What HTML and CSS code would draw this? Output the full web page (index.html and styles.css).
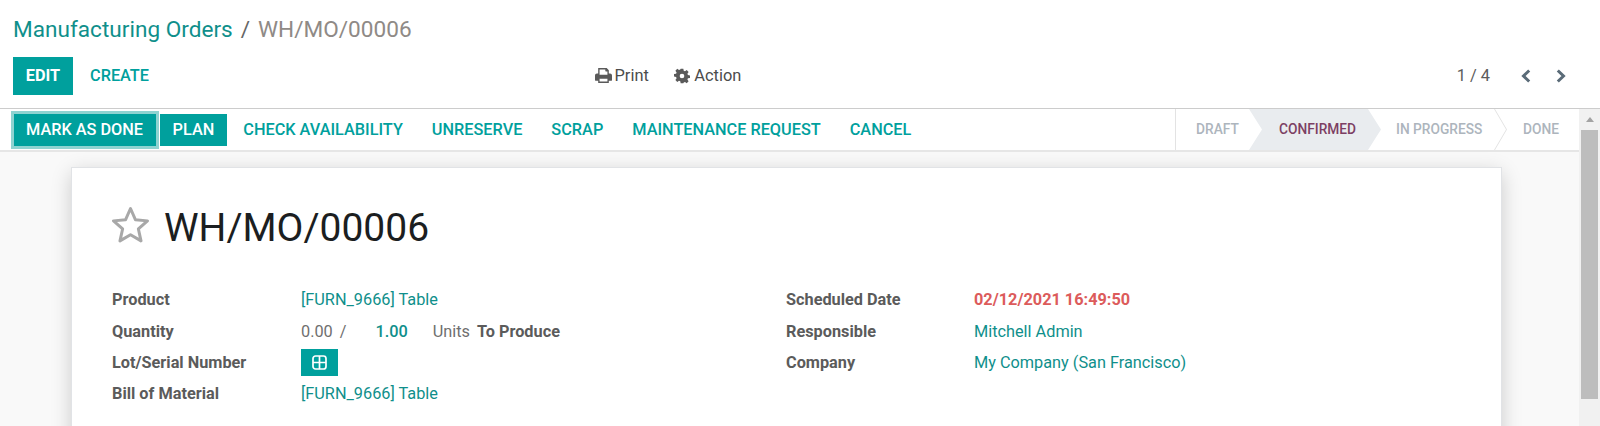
FILE: index.html
```html
<!DOCTYPE html>
<html lang="en">
<head>
<meta charset="utf-8">
<title>WH/MO/00006</title>
<link rel="stylesheet" href="styles.css">
</head>
<body>
<header class="panel">
  <nav class="crumbs"><a class="crumb-link">Manufacturing Orders</a><span class="crumb-sep">/</span><span class="crumb-cur">WH/MO/00006</span></nav>
  <div class="panel-row">
    <div class="panel-left">
      <button class="btn btn-edit">EDIT</button>
      <button class="btn btn-link btn-create">CREATE</button>
    </div>
    <div class="panel-mid">
      <span class="tool">
        <svg class="tool-ico" viewBox="0 0 16 14"><path fill-rule="evenodd" d="M3 0h8l2 2v3.2h1.2c1 0 1.8.8 1.8 1.8v4.2c0 .5-.3.8-.8.8H13v2H3v-2H.8c-.5 0-.8-.3-.8-.8V7c0-1 .8-1.800 1.800-1.800H3zm1.300 1.400v4.800h7.400V3.200h-1.400c-.4 0-.6-.2-.6-.6V1.400zM4.300 10v2.700h7.400V10z"/></svg>Print</span>
      <span class="tool tool-action">
        <svg class="tool-ico gear" viewBox="0 0 24 24"><path fill-rule="evenodd" d="M10 1h4l.6 3.100 1.900.8L19.100 3.100 21.900 6l-1.800 2.600.8 1.900 3.100.6v3.800l-3.100.6-.8 1.900 1.800 2.600-2.800 2.900-2.600-1.800-1.900.8L14 23h-4l-.6-3.100-1.900-.8-2.600 1.800L2.100 18l1.800-2.600-.8-1.900L0 12.900V9.100l3.100-.6.8-1.900L2.100 4l2.800-2.900 2.600 1.800 1.900-.8zM12 8.500a3.500 3.500 0 1 0 0 7 3.500 3.500 0 0 0 0-7z"/></svg>Action</span>
    </div>
    <div class="panel-right">
      <span class="pager">1 / 4</span>
      <svg class="chev" viewBox="0 0 10 14"><path d="M8.200 1.500 2.500 7l5.700 5.500"/></svg>
      <svg class="chev" viewBox="0 0 10 14"><path d="M1.800 1.500 7.500 7l-5.700 5.500"/></svg>
    </div>
  </div>
</header>
<div class="body">
  <main class="main">
    <div class="statusbar">
      <div class="actions">
        <button class="btn btn-primary btn-focus">MARK AS DONE</button>
        <button class="btn btn-primary btn-plan">PLAN</button>
        <button class="btn btn-link">CHECK AVAILABILITY</button>
        <button class="btn btn-link">UNRESERVE</button>
        <button class="btn btn-link">SCRAP</button>
        <button class="btn btn-link">MAINTENANCE REQUEST</button>
        <button class="btn btn-link">CANCEL</button>
      </div>
      <div class="steps">
        <span class="step step-first">DRAFT</span>
        <span class="step step-on">CONFIRMED</span>
        <span class="step step-prog">IN PROGRESS</span>
        <span class="step step-last">DONE</span>
      </div>
    </div>
    <div class="canvas">
      <section class="sheet">
        <h1 class="title">
          <svg class="star" viewBox="0 0 38 40"><path d="M18.500 3.500 23.380 14.690 35.500 15.870 26.390 23.960 29.020 35.880 18.500 29.700 7.980 35.880 10.610 23.960 1.500 15.870 13.620 14.690Z"/></svg>
          <span>WH/MO/00006</span>
        </h1>
        <div class="groups">
          <div class="group">
            <div class="row"><span class="label">Product</span><a class="val link">[FURN_9666] Table</a></div>
            <div class="row"><span class="label">Quantity</span><span class="val qty"><span class="muted">0.00</span><span class="muted slash">/</span><span class="qty-num">1.00</span><span class="muted">Units</span><strong class="qty-tail">To Produce</strong></span></div>
            <div class="row"><span class="label">Lot/Serial Number</span><span class="val"><button class="btn-add"><svg class="add-ico" viewBox="0 0 15 15"><rect x="1" y="1" width="13" height="13" rx="2.500"/><path d="M7.500 1v13M1 7.500h13"/></svg></button></span></div>
            <div class="row"><span class="label">Bill of Material</span><a class="val link">[FURN_9666] Table</a></div>
          </div>
          <div class="group group-right">
            <div class="row"><span class="label">Scheduled Date</span><span class="val late">02/12/2021 16:49:50</span></div>
            <div class="row"><span class="label">Responsible</span><a class="val link">Mitchell Admin</a></div>
            <div class="row"><span class="label">Company</span><a class="val link">My Company (San Francisco)</a></div>
          </div>
        </div>
      </section>
    </div>
  </main>
  <div class="scrollbar"><span class="sb-arrow"></span><span class="sb-thumb"></span></div>
</div>
</body>
</html>
```
FILE: styles.css
```css
* { box-sizing: border-box; }
html, body { margin: 0; height: 100%; overflow: hidden; }
body { display: flex; flex-direction: column; background: #fff; color: #4c4c4c; font: 16.3px/1.5 Roboto, "Liberation Sans", sans-serif; }
a { text-decoration: none; }

.panel { height: 109px; flex: none; padding: 13px 33px 0 13px; border-bottom: 1px solid #ccc; }
.crumbs { display: flex; align-items: center; height: 33px; font-size: 22.600px; }
.crumb-link { color: #0f8f8b; }
.crumb-sep { margin: 0 8px; color: #666; }
.crumb-cur { color: #8f8a86; }
.panel-row { display: grid; grid-template-columns: 1fr 1fr 1fr; align-items: center; margin-top: 11px; height: 38px; }
.panel-left { display: flex; align-items: center; }
.panel-mid { display: flex; justify-content: flex-start; gap: 25.500px; padding-left: 64px; font-size: 16.400px; color: #4c4c4c; }
.tool { display: inline-flex; align-items: center; gap: 2.500px; }
.tool-action { gap: 4px; }
.tool-ico { width: 17px; height: 15px; fill: #5a5a5a; }
.tool-ico.gear { width: 16px; height: 16px; }
.panel-right { display: flex; align-items: center; justify-content: flex-end; }
.pager { color: #5c5c5c; font-size: 16.400px; margin-right: 31px; }
.chev { width: 10px; height: 14px; margin-right: 25px; fill: none; stroke: #5a6b78; stroke-width: 3; }
.chev:last-child { margin-right: 1px; }

.btn { border: 0; background: none; font: 500 16.300px/1.4 Roboto, "Liberation Sans", sans-serif; padding: 0 12.500px; cursor: pointer; color: #00a09d; white-space: nowrap; }
.btn-edit { background: #00a09d; color: #fff; height: 38px; width: 60px; padding: 0; font-weight: 700; }
.btn-link { padding: 0 14.500px; }
.btn-create { padding: 0 17px; }
.btn-primary { background: #00a09d; color: #fff; height: 32px; }
.btn-plan { padding: 0 13px; }
.btn-plan + .btn-link { margin-left: 1.500px; }
.btn-focus { box-shadow: 0 0 0 3px #8fd3d1; margin-right: 4px; }

.body { flex: 1; display: flex; min-height: 0; }
.main { flex: 1; display: flex; flex-direction: column; min-width: 0; background: #f9f9f9; }
.statusbar { display: flex; justify-content: space-between; align-items: stretch; height: 43px; background: #fff; border-bottom: 2px solid #e6e6e6; }
.actions { display: flex; align-items: center; padding: 1px 0 0 13.500px; }
.steps { display: flex; height: 41px; border-left: 1px solid #e3e3e3; font-size: 13.750px; font-weight: 500; color: #adb5bd; }
.step { display: flex; align-items: center; position: relative; }
.step-first { width: 73px; padding-left: 20px; }
.step-on { width: 132px; padding-left: 30px; color: #7c3f63; background: #e9ecef; clip-path: polygon(0 0, 119px 0, 132px 50%, 119px 100%, 0 100%, 13px 50%); }
.step-prog { width: 113px; padding-left: 15px; }
.step-last { width: 85px; padding-left: 29px; }
.step-prog::after { content: ""; position: absolute; top: 0; right: -13px; width: 13px; height: 100%; background: #e3e3e3; clip-path: polygon(0 0, 1px 0, 100% 50%, 1px 100%, 0 100%, 12px 50%); }

.canvas { flex: 1; padding: 15px 77px 0 71px; overflow: hidden; }
.sheet { height: 300px; background: #fff; border: 1px solid #e1e3e6; box-shadow: 0 5px 20px -1px rgba(0,0,0,.2); padding: 0 40px; }
.title { display: flex; align-items: flex-start; margin: 37px 0 0; height: 46px; font-size: 39px; font-weight: 400; line-height: 46px; color: #1b1e21; }
.star { width: 38px; height: 40px; fill: none; stroke: #a8a8a8; stroke-width: 3; stroke-linejoin: round; margin-right: 14px; flex: none; }
.groups { display: grid; grid-template-columns: 674px 1fr; margin-top: 34px; }
.row { display: flex; align-items: center; height: 31.200px; }
.label { width: 189px; flex: none; font-weight: 700; color: #5b5b5b; }
.group-right .label { width: 188px; }
.val { display: flex; align-items: center; }
.link { color: #0f8f8b; }
.muted { color: #6f6f6f; }
.slash { margin-left: 7px; }
.qty-num { color: #0f8f8b; font-weight: 500; margin: 0 25px 0 29px; }
.qty-tail { margin-left: 7px; font-weight: 700; color: #5b5b5b; }
.late { color: #dc5b5b; font-weight: 700; }
.btn-add { display: flex; align-items: center; justify-content: center; border: 0; padding: 0; width: 37px; height: 27px; background: #00a09d; }
.add-ico { width: 15px; height: 15px; fill: none; stroke: #fff; stroke-width: 1.700; }

.scrollbar { width: 21px; flex: none; background: #f1f1f1; display: flex; flex-direction: column; align-items: center; }
.sb-arrow { width: 0; height: 0; border: 4px solid transparent; border-top: 0; border-bottom: 5px solid #a3a3a3; margin-top: 8px; }
.sb-thumb { width: 17px; height: 269px; background: #bdbdbd; margin-top: 8px; }
```
